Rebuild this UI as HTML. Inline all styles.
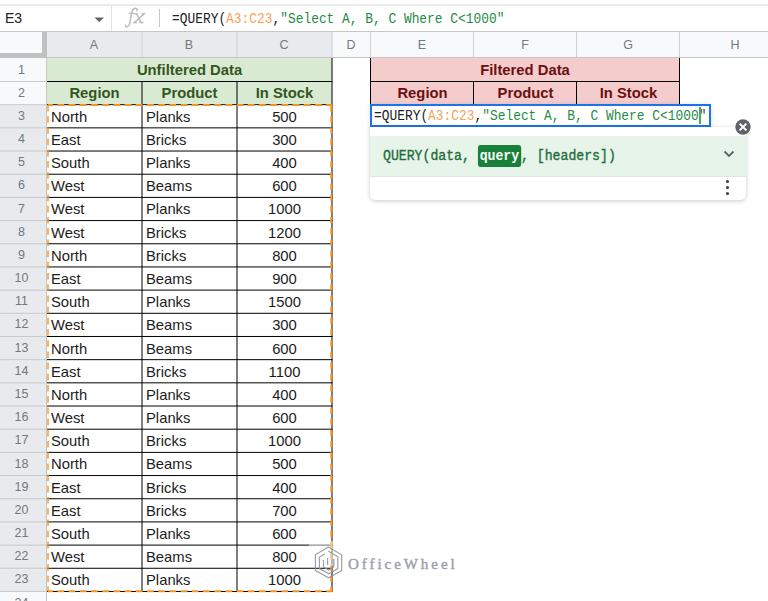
<!DOCTYPE html><html><head><meta charset="utf-8"><style>
html,body{margin:0;padding:0;}
body{width:768px;height:601px;overflow:hidden;position:relative;background:#fff;font-family:"Liberation Sans",sans-serif;}
.t{position:absolute;white-space:nowrap;line-height:20px;font-size:14.8px;color:#1c1c1c;}
.c{text-align:center;}
.b{font-weight:bold;}
.hd{position:absolute;white-space:nowrap;line-height:20px;font-size:12.5px;color:#73787d;text-align:center;}
.box{position:absolute;}
.mono{font-family:"Liberation Mono",monospace;}
</style></head><body>

<div class="box" style="left:0;top:4px;width:768px;height:2px;background:#ebebeb"></div>
<div class="box" style="left:0;top:31px;width:768px;height:1px;background:#c7c7c7"></div>
<div class="box" style="left:0;top:32px;width:768px;height:25px;background:#f8f9fa"></div>
<div class="box" style="left:47px;top:32px;width:285px;height:25px;background:#e8eaed"></div>
<div class="box" style="left:0;top:58px;width:46px;height:543px;background:#f8f9fa"></div>
<div class="box" style="left:0;top:105px;width:46px;height:486px;background:#e8eaed"></div>
<div class="box" style="left:47px;top:58px;width:285px;height:46px;background:#d9ead3"></div>
<div class="box" style="left:371px;top:58px;width:308px;height:46px;background:#f4cccc"></div>
<svg class="box" style="left:0;top:0" width="768" height="601"><line x1="0" y1="57.5" x2="768" y2="57.5" stroke="#c6c6c6" stroke-width="1"/><line x1="142.0" y1="32" x2="142.0" y2="57" stroke="#d0d0d0" stroke-width="1"/><line x1="237.0" y1="32" x2="237.0" y2="57" stroke="#d0d0d0" stroke-width="1"/><line x1="332.0" y1="32" x2="332.0" y2="57" stroke="#d0d0d0" stroke-width="1"/><line x1="370.5" y1="32" x2="370.5" y2="57" stroke="#d0d0d0" stroke-width="1"/><line x1="473.5" y1="32" x2="473.5" y2="57" stroke="#d0d0d0" stroke-width="1"/><line x1="576.5" y1="32" x2="576.5" y2="57" stroke="#d0d0d0" stroke-width="1"/><line x1="679.5" y1="32" x2="679.5" y2="57" stroke="#d0d0d0" stroke-width="1"/><line x1="46.5" y1="58" x2="46.5" y2="601" stroke="#c6c6c6" stroke-width="1"/><line x1="0" y1="81.5" x2="46" y2="81.5" stroke="#c8c8c8" stroke-width="1"/><line x1="0" y1="104.68" x2="46" y2="104.68" stroke="#c8c8c8" stroke-width="1"/><line x1="0" y1="127.86" x2="46" y2="127.86" stroke="#c8c8c8" stroke-width="1"/><line x1="0" y1="151.04" x2="46" y2="151.04" stroke="#c8c8c8" stroke-width="1"/><line x1="0" y1="174.22" x2="46" y2="174.22" stroke="#c8c8c8" stroke-width="1"/><line x1="0" y1="197.4" x2="46" y2="197.4" stroke="#c8c8c8" stroke-width="1"/><line x1="0" y1="220.57999999999998" x2="46" y2="220.57999999999998" stroke="#c8c8c8" stroke-width="1"/><line x1="0" y1="243.76" x2="46" y2="243.76" stroke="#c8c8c8" stroke-width="1"/><line x1="0" y1="266.94" x2="46" y2="266.94" stroke="#c8c8c8" stroke-width="1"/><line x1="0" y1="290.12" x2="46" y2="290.12" stroke="#c8c8c8" stroke-width="1"/><line x1="0" y1="313.3" x2="46" y2="313.3" stroke="#c8c8c8" stroke-width="1"/><line x1="0" y1="336.48" x2="46" y2="336.48" stroke="#c8c8c8" stroke-width="1"/><line x1="0" y1="359.65999999999997" x2="46" y2="359.65999999999997" stroke="#c8c8c8" stroke-width="1"/><line x1="0" y1="382.84" x2="46" y2="382.84" stroke="#c8c8c8" stroke-width="1"/><line x1="0" y1="406.02" x2="46" y2="406.02" stroke="#c8c8c8" stroke-width="1"/><line x1="0" y1="429.2" x2="46" y2="429.2" stroke="#c8c8c8" stroke-width="1"/><line x1="0" y1="452.38" x2="46" y2="452.38" stroke="#c8c8c8" stroke-width="1"/><line x1="0" y1="475.56" x2="46" y2="475.56" stroke="#c8c8c8" stroke-width="1"/><line x1="0" y1="498.74" x2="46" y2="498.74" stroke="#c8c8c8" stroke-width="1"/><line x1="0" y1="521.9200000000001" x2="46" y2="521.9200000000001" stroke="#c8c8c8" stroke-width="1"/><line x1="0" y1="545.1" x2="46" y2="545.1" stroke="#c8c8c8" stroke-width="1"/><line x1="0" y1="568.28" x2="46" y2="568.28" stroke="#c8c8c8" stroke-width="1"/><line x1="0" y1="591.46" x2="46" y2="591.46" stroke="#c8c8c8" stroke-width="1"/><rect x="42" y="32" width="5" height="26" fill="#c0c0c0"/><rect x="0" y="53" width="47" height="5" fill="#c0c0c0"/><line x1="47" y1="81.5" x2="332.5" y2="81.5" stroke="#000" stroke-width="1"/><line x1="47" y1="104.68" x2="332.5" y2="104.68" stroke="#000" stroke-width="1"/><line x1="47" y1="127.86" x2="332.5" y2="127.86" stroke="#000" stroke-width="1"/><line x1="47" y1="151.04" x2="332.5" y2="151.04" stroke="#000" stroke-width="1"/><line x1="47" y1="174.22" x2="332.5" y2="174.22" stroke="#000" stroke-width="1"/><line x1="47" y1="197.4" x2="332.5" y2="197.4" stroke="#000" stroke-width="1"/><line x1="47" y1="220.57999999999998" x2="332.5" y2="220.57999999999998" stroke="#000" stroke-width="1"/><line x1="47" y1="243.76" x2="332.5" y2="243.76" stroke="#000" stroke-width="1"/><line x1="47" y1="266.94" x2="332.5" y2="266.94" stroke="#000" stroke-width="1"/><line x1="47" y1="290.12" x2="332.5" y2="290.12" stroke="#000" stroke-width="1"/><line x1="47" y1="313.3" x2="332.5" y2="313.3" stroke="#000" stroke-width="1"/><line x1="47" y1="336.48" x2="332.5" y2="336.48" stroke="#000" stroke-width="1"/><line x1="47" y1="359.65999999999997" x2="332.5" y2="359.65999999999997" stroke="#000" stroke-width="1"/><line x1="47" y1="382.84" x2="332.5" y2="382.84" stroke="#000" stroke-width="1"/><line x1="47" y1="406.02" x2="332.5" y2="406.02" stroke="#000" stroke-width="1"/><line x1="47" y1="429.2" x2="332.5" y2="429.2" stroke="#000" stroke-width="1"/><line x1="47" y1="452.38" x2="332.5" y2="452.38" stroke="#000" stroke-width="1"/><line x1="47" y1="475.56" x2="332.5" y2="475.56" stroke="#000" stroke-width="1"/><line x1="47" y1="498.74" x2="332.5" y2="498.74" stroke="#000" stroke-width="1"/><line x1="47" y1="521.9200000000001" x2="332.5" y2="521.9200000000001" stroke="#000" stroke-width="1"/><line x1="47" y1="545.1" x2="332.5" y2="545.1" stroke="#000" stroke-width="1"/><line x1="47" y1="568.28" x2="332.5" y2="568.28" stroke="#000" stroke-width="1"/><line x1="47" y1="591.46" x2="332.5" y2="591.46" stroke="#000" stroke-width="1"/><line x1="142.0" y1="81.5" x2="142.0" y2="591.96" stroke="#000" stroke-width="1"/><line x1="237.0" y1="81.5" x2="237.0" y2="591.96" stroke="#000" stroke-width="1"/><line x1="332.0" y1="58" x2="332.0" y2="591.96" stroke="#000" stroke-width="1"/><line x1="370.5" y1="58" x2="370.5" y2="105.18" stroke="#000" stroke-width="1"/><line x1="679.5" y1="58" x2="679.5" y2="105.18" stroke="#000" stroke-width="1"/><line x1="370" y1="81.5" x2="680" y2="81.5" stroke="#000" stroke-width="1"/><line x1="370" y1="104.68" x2="680" y2="104.68" stroke="#000" stroke-width="1"/><line x1="473.5" y1="81.5" x2="473.5" y2="105.18" stroke="#000" stroke-width="1"/><line x1="576.5" y1="81.5" x2="576.5" y2="105.18" stroke="#000" stroke-width="1"/><path d="M48 104.98 H332.5" stroke="#f7941d" stroke-width="2" stroke-dasharray="6.6 4.6" stroke-dashoffset="1.7" fill="none"/><path d="M48 591.36 H332.5" stroke="#f7941d" stroke-width="2" stroke-dasharray="6.6 4.6" stroke-dashoffset="1.7" fill="none"/><path d="M48 104.98 V591.36" stroke="#f7941d" stroke-opacity="0.7" stroke-width="2" stroke-dasharray="6.6 4.6" fill="none"/><path d="M331.3 104.98 V591.36" stroke="#f7941d" stroke-width="2" stroke-dasharray="6.6 4.6" fill="none"/></svg>
<div class="hd" style="left:47px;width:94px;top:35px">A</div>
<div class="hd" style="left:142px;width:94px;top:35px">B</div>
<div class="hd" style="left:237px;width:94px;top:35px">C</div>
<div class="hd" style="left:332px;width:38px;top:35px">D</div>
<div class="hd" style="left:371px;width:102px;top:35px">E</div>
<div class="hd" style="left:474px;width:102px;top:35px">F</div>
<div class="hd" style="left:577px;width:102px;top:35px">G</div>
<div class="hd" style="left:680px;width:110px;top:35px">H</div>
<div class="hd" style="left:0;width:43px;top:60px">1</div>
<div class="hd" style="left:0;width:43px;top:83px">2</div>
<div class="hd" style="left:0;width:43px;top:106px">3</div>
<div class="hd" style="left:0;width:43px;top:129px">4</div>
<div class="hd" style="left:0;width:43px;top:152px">5</div>
<div class="hd" style="left:0;width:43px;top:175px">6</div>
<div class="hd" style="left:0;width:43px;top:199px">7</div>
<div class="hd" style="left:0;width:43px;top:222px">8</div>
<div class="hd" style="left:0;width:43px;top:245px">9</div>
<div class="hd" style="left:0;width:43px;top:268px">10</div>
<div class="hd" style="left:0;width:43px;top:291px">11</div>
<div class="hd" style="left:0;width:43px;top:314px">12</div>
<div class="hd" style="left:0;width:43px;top:338px">13</div>
<div class="hd" style="left:0;width:43px;top:361px">14</div>
<div class="hd" style="left:0;width:43px;top:384px">15</div>
<div class="hd" style="left:0;width:43px;top:407px">16</div>
<div class="hd" style="left:0;width:43px;top:430px">17</div>
<div class="hd" style="left:0;width:43px;top:454px">18</div>
<div class="hd" style="left:0;width:43px;top:477px">19</div>
<div class="hd" style="left:0;width:43px;top:500px">20</div>
<div class="hd" style="left:0;width:43px;top:523px">21</div>
<div class="hd" style="left:0;width:43px;top:546px">22</div>
<div class="hd" style="left:0;width:43px;top:569px">23</div>
<div class="hd" style="left:0;width:43px;top:593px">24</div>
<div class="t b c" style="left:47px;width:285px;top:60px;color:#33561d">Unfiltered Data</div>
<div class="t b c" style="left:371px;width:308px;top:60px;color:#6b1010">Filtered Data</div>
<div class="t b c" style="left:47px;width:95px;top:83px;color:#33561d">Region</div>
<div class="t b c" style="left:142px;width:95px;top:83px;color:#33561d">Product</div>
<div class="t b c" style="left:237px;width:95px;top:83px;color:#33561d">In Stock</div>
<div class="t b c" style="left:371px;width:103px;top:83px;color:#6b1010">Region</div>
<div class="t b c" style="left:474px;width:103px;top:83px;color:#6b1010">Product</div>
<div class="t b c" style="left:577px;width:103px;top:83px;color:#6b1010">In Stock</div>
<div class="t" style="left:51px;top:107px">North</div>
<div class="t" style="left:146px;top:107px">Planks</div>
<div class="t c" style="left:237px;width:95px;top:107px">500</div>
<div class="t" style="left:51px;top:130px">East</div>
<div class="t" style="left:146px;top:130px">Bricks</div>
<div class="t c" style="left:237px;width:95px;top:130px">300</div>
<div class="t" style="left:51px;top:153px">South</div>
<div class="t" style="left:146px;top:153px">Planks</div>
<div class="t c" style="left:237px;width:95px;top:153px">400</div>
<div class="t" style="left:51px;top:176px">West</div>
<div class="t" style="left:146px;top:176px">Beams</div>
<div class="t c" style="left:237px;width:95px;top:176px">600</div>
<div class="t" style="left:51px;top:199px">West</div>
<div class="t" style="left:146px;top:199px">Planks</div>
<div class="t c" style="left:237px;width:95px;top:199px">1000</div>
<div class="t" style="left:51px;top:223px">West</div>
<div class="t" style="left:146px;top:223px">Bricks</div>
<div class="t c" style="left:237px;width:95px;top:223px">1200</div>
<div class="t" style="left:51px;top:246px">North</div>
<div class="t" style="left:146px;top:246px">Bricks</div>
<div class="t c" style="left:237px;width:95px;top:246px">800</div>
<div class="t" style="left:51px;top:269px">East</div>
<div class="t" style="left:146px;top:269px">Beams</div>
<div class="t c" style="left:237px;width:95px;top:269px">900</div>
<div class="t" style="left:51px;top:292px">South</div>
<div class="t" style="left:146px;top:292px">Planks</div>
<div class="t c" style="left:237px;width:95px;top:292px">1500</div>
<div class="t" style="left:51px;top:315px">West</div>
<div class="t" style="left:146px;top:315px">Beams</div>
<div class="t c" style="left:237px;width:95px;top:315px">300</div>
<div class="t" style="left:51px;top:339px">North</div>
<div class="t" style="left:146px;top:339px">Beams</div>
<div class="t c" style="left:237px;width:95px;top:339px">600</div>
<div class="t" style="left:51px;top:362px">East</div>
<div class="t" style="left:146px;top:362px">Bricks</div>
<div class="t c" style="left:237px;width:95px;top:362px">1100</div>
<div class="t" style="left:51px;top:385px">North</div>
<div class="t" style="left:146px;top:385px">Planks</div>
<div class="t c" style="left:237px;width:95px;top:385px">400</div>
<div class="t" style="left:51px;top:408px">West</div>
<div class="t" style="left:146px;top:408px">Planks</div>
<div class="t c" style="left:237px;width:95px;top:408px">600</div>
<div class="t" style="left:51px;top:431px">South</div>
<div class="t" style="left:146px;top:431px">Bricks</div>
<div class="t c" style="left:237px;width:95px;top:431px">1000</div>
<div class="t" style="left:51px;top:454px">North</div>
<div class="t" style="left:146px;top:454px">Beams</div>
<div class="t c" style="left:237px;width:95px;top:454px">500</div>
<div class="t" style="left:51px;top:478px">East</div>
<div class="t" style="left:146px;top:478px">Bricks</div>
<div class="t c" style="left:237px;width:95px;top:478px">400</div>
<div class="t" style="left:51px;top:501px">East</div>
<div class="t" style="left:146px;top:501px">Bricks</div>
<div class="t c" style="left:237px;width:95px;top:501px">700</div>
<div class="t" style="left:51px;top:524px">South</div>
<div class="t" style="left:146px;top:524px">Planks</div>
<div class="t c" style="left:237px;width:95px;top:524px">600</div>
<div class="t" style="left:51px;top:547px">West</div>
<div class="t" style="left:146px;top:547px">Beams</div>
<div class="t c" style="left:237px;width:95px;top:547px">800</div>
<div class="t" style="left:51px;top:570px">South</div>
<div class="t" style="left:146px;top:570px">Planks</div>
<div class="t c" style="left:237px;width:95px;top:570px">1000</div>
<div class="t" style="left:5px;top:8px;font-size:14px;color:#202124">E3</div>
<svg class="box" style="left:94px;top:17px" width="11" height="6"><path d="M0.5 0.5 L10 0.5 L5.25 5 Z" fill="#5f6368"/></svg>
<div class="box" style="left:111px;top:6px;width:1px;height:25px;background:#e3e3e3"></div>
<svg class="box" style="left:116px;top:4px" width="40" height="28" viewBox="0 0 40 28"><g fill="none" stroke="#bdbdbd" stroke-linecap="round"><path d="M9.4 21.2 C9.6 23.6 12.6 23.6 13.6 19.6 L15.6 9.2 C16.4 5.2 18.2 4 19.6 4.3 C21 4.6 21.4 5.6 20.8 6.4" stroke-width="1.6"/><path d="M13.2 9.4 H17.6" stroke-width="1.3"/><path d="M20.4 9.6 L25.2 18.6 M28.4 9.6 L18.4 18.6" stroke-width="1.5"/><path d="M17.8 9.6 H21.2 M25.8 9.6 H28.8 M17.4 18.6 H20.4 M23.6 18.6 H27.2" stroke-width="1.1"/></g></svg>
<div class="box" style="left:159px;top:9px;width:1px;height:18px;background:#c7c7c7"></div>
<div class="t mono" style="left:172px;top:9px;font-size:14px;color:#202124;transform:scaleX(0.92);transform-origin:0 0">=QUERY(<span style="color:#f4a35a">A3:C23</span>,<span style="color:#1e8b45">"Select A, B, C Where C&lt;1000"</span></div>
<div class="box" style="left:370px;top:104px;width:341px;height:23px;box-sizing:border-box;border:2px solid #1a73e8;background:#fff;box-shadow:0 1px 5px rgba(60,64,67,.18)"></div>
<div class="t mono" style="left:374px;top:106px;font-size:14px;color:#202124;transform:scaleX(0.92);transform-origin:0 0">=QUERY(<span style="color:#f4a35a">A3:C23</span>,<span style="color:#1e8b45">"Select A, B, C Where C&lt;1000</span><span style="color:#444">"</span></div>
<div class="box" style="left:699px;top:107px;width:2px;height:17px;background:#4caf50"></div>
<div class="box" style="left:370px;top:127px;width:376px;height:73px;background:#fff;border-radius:0 0 5px 5px;box-shadow:0 1px 4px rgba(60,64,67,.28);overflow:hidden"><div class="box" style="left:0;top:9px;width:376px;height:40px;background:#e6f4ea"></div><div class="box" style="left:0;top:49px;width:376px;height:1px;background:#e3e3e3"></div></div>
<div class="t mono" style="left:383px;top:146px;font-size:14px;color:#1f6e3a;-webkit-text-stroke:0.35px #1f6e3a;transform:scaleX(0.94);transform-origin:0 0">QUERY(data, <span style="display:inline-block;background:#188038;color:#fff;-webkit-text-stroke:0;font-weight:bold;border-radius:3px;padding:0 2px;line-height:22px;vertical-align:top;margin-top:-1px">query</span>, [headers])</div>
<svg class="box" style="left:722px;top:149px" width="14" height="11"><path d="M2.5 2.5 L7 7 L11.5 2.5" stroke="#5f6368" stroke-width="1.8" fill="none"/></svg>
<svg class="box" style="left:722px;top:176px" width="12" height="22"><circle cx="5.5" cy="5.5" r="1.6" fill="#444"/><circle cx="5.5" cy="11.5" r="1.6" fill="#444"/><circle cx="5.5" cy="17.5" r="1.6" fill="#444"/></svg>
<svg class="box" style="left:733px;top:117px" width="20" height="20"><circle cx="10" cy="10" r="7.7" fill="#5f6368"/><path d="M6.6 6.6 L13.4 13.4 M13.4 6.6 L6.6 13.4" stroke="#fff" stroke-width="2"/></svg>
<div class="box" style="left:309px;top:541px;width:152px;height:25px;background:rgba(255,255,255,0.45)"></div>
<svg class="box" style="left:308px;top:540px" width="40" height="42" viewBox="0 0 40 42"><g fill="none" stroke="#8a9099" stroke-opacity="0.85" stroke-width="1.2"><path d="M20.3 7 L33.7 14.8 L33.7 30.6 L20.7 37.7 L7.4 30.6 L7.4 14.8 Z"/><path d="M20.3 11 L29.8 16.8 L29.8 28.6 L20.7 33.8 L11.4 28.6 L11.4 17 L17 13.8"/><path d="M15.5 20 L15.5 27 L20.7 30 L25.8 27 L25.8 19"/><path d="M19.6 18 L19.6 25"/></g></svg>
<div class="t" style="left:348px;top:554px;font-family:'Liberation Serif';font-size:15px;letter-spacing:2.95px;color:#9ca1ab;-webkit-text-stroke:0.45px #9ca1ab">OfficeWheel</div>
</body></html>
